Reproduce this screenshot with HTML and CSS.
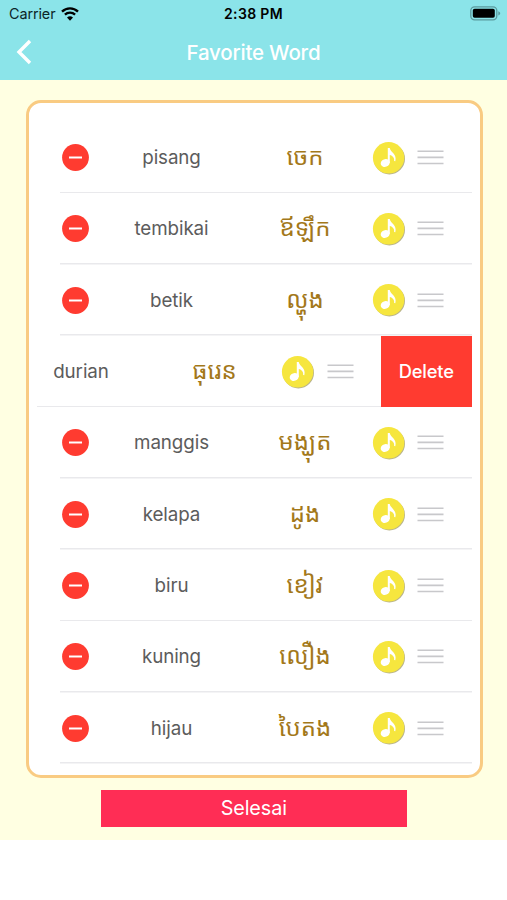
FILE: index.html
```html
<!DOCTYPE html>
<html lang="ms">
<head>
    <meta charset="UTF-8">
    <meta name="viewport" content="width=device-width, initial-scale=1.0">
    <title>Favorite Word</title>
    <link rel="stylesheet" href="styles.css">
</head>
<body>
    <header class="header">
        <div class="status-bar">
            <div class="carrier">
                <span>Carrier</span>
                <svg class="wifi" viewBox="0 0 18 14">
                    <path d="M1 4.6a11.6 11.6 0 0 1 16 0" fill="none" stroke="#000" stroke-width="2.4"/>
                    <path d="M3.9 7.7a7.4 7.4 0 0 1 10.2 0" fill="none" stroke="#000" stroke-width="2.3"/>
                    <path d="M9 13.7L6 10.6a4.3 4.3 0 0 1 6 0z"/>
                </svg>
            </div>
            <span class="time">2:38 PM</span>
            <svg class="battery" viewBox="0 0 31 15">
                <rect x="0.8" y="0.8" width="26" height="13" rx="3.8" fill="none" stroke="#5b9a9e" stroke-width="1.3"/>
                <rect x="2.8" y="2.8" width="22" height="9" rx="1.8"/>
                <path d="M28.3 5.2c2.5.8 2.5 3.4 0 4.2z" fill="#5b9a9e"/>
            </svg>
        </div>
        <div class="nav-bar">
            <svg class="back" viewBox="0 0 16 26">
                <path d="M14 2L3 13l11 11" fill="none" stroke="#fff" stroke-width="3.4"/>
            </svg>
            <h1>Favorite Word</h1>
        </div>
    </header>

    <main class="content">
        <div class="card">
            <ul class="word-list" id="wordList"></ul>
        </div>
        <button class="done">Selesai</button>
    </main>

    <script src="script.js"></script>
</body>
</html>
```
FILE: styles.css
```css
* {
    box-sizing: border-box;
}

body {
    font-family: Inter, Roboto, sans-serif;
    background-color: #fff;
    margin: 0;
}

svg {
    display: block;
}

.header {
    background: #8be4e9;
    height: 79.5px;
}

.status-bar {
    display: grid;
    grid-template-columns: 1fr auto 1fr;
    align-items: center;
    height: 27px;
    padding: 0 6px 0 9px;
    font-size: 14.4px;
    color: #0b2628;
}

.carrier {
    display: flex;
    align-items: center;
    gap: 6px;
    letter-spacing: -0.1px;
}

.wifi {
    width: 18px;
    height: 14px;
}

.time {
    margin-right: 3px;
    font-weight: 600;
    font-size: 14px;
    letter-spacing: 0.35px;
    color: #000;
}

.battery {
    width: 31px;
    height: 15px;
    justify-self: end;
}

.nav-bar {
    display: grid;
    grid-template-columns: 32px 1fr 32px;
    align-items: center;
    height: 50px;
    padding: 0 16px;
}

.back {
    width: 16px;
    height: 26px;
}

h1 {
    margin: 0;
    text-align: center;
    color: #fff;
    font-size: 20.5px;
    font-weight: 500;
    letter-spacing: -0.2px;
}

.content {
    height: 760px;
    padding: 20px 24.5px 0 25.5px;
    background: #ffffe2;
}

.card {
    height: 678px;
    padding: 19.5px 8px 0 8.5px;
    background: #fff;
    border: 3px solid #f9cb82;
    border-radius: 15px;
}

.word-list {
    margin: 0;
    padding: 0;
    list-style: none;
    overflow: hidden;
}

.row {
    display: flex;
    height: 71.33px;
}

.row.swiped {
    margin-left: -90.5px;
}

.cell {
    flex: 0 0 434.5px;
    display: grid;
    grid-template-columns: 27px 165px 102px 65px 27px;
    align-items: center;
    padding-left: 25px;
    background: linear-gradient(#e9e9ec, #e9e9ec) 23px 100% / 100% 1.5px no-repeat;
}

.minus {
    width: 27px;
    height: 27px;
}

.word {
    text-align: center;
    font-size: 18.8px;
    letter-spacing: -0.1px;
    color: #5c5c5c;
}

.khmer {
    padding-bottom: 3px;
    text-align: center;
    white-space: nowrap;
    font-family: "Noto Sans Khmer", "Khmer OS", "DejaVu Sans", sans-serif;
    font-size: 24px;
    line-height: 32px;
    color: #a3781a;
}

.note {
    width: 34px;
    height: 34px;
    justify-self: center;
}

.handle {
    width: 27px;
    height: 15px;
    margin-left: -4px;
}

.delete {
    flex: 0 0 90.5px;
    height: 71px;
    padding: 0;
    border: none;
    background: #ff3b30;
    color: #fff;
    font-family: inherit;
    font-size: 18.3px;
    font-weight: 500;
    letter-spacing: -0.2px;
}

.done {
    display: block;
    width: 305.5px;
    height: 36.5px;
    margin: 12.5px 0 0 75.5px;
    padding: 0;
    border: none;
    background: #ff2d55;
    color: #fff;
    font-family: inherit;
    font-size: 19.8px;
    letter-spacing: -0.1px;
}
```
FILE: script.js
```javascript
const words = [
    { ms: 'pisang', km: 'ចេក' },
    { ms: 'tembikai', km: 'ឪឡឹក' },
    { ms: 'betik', km: 'ល្ហុង' },
    { ms: 'durian', km: 'ធុរេន', swiped: true },
    { ms: 'manggis', km: 'មង្ឃុត' },
    { ms: 'kelapa', km: 'ដូង' },
    { ms: 'biru', km: 'ខៀវ' },
    { ms: 'kuning', km: 'លឿង' },
    { ms: 'hijau', km: 'បៃតង' }
];

const minusIcon = `<svg class="minus" viewBox="0 0 27 27">
    <circle cx="13.5" cy="13.5" r="13.4" fill="#ff3b30"/>
    <path d="M7 13.5h13" stroke="#fff" stroke-width="2"/>
</svg>`;

const noteIcon = `<svg class="note" viewBox="0 0 34 34">
    <circle cx="17.4" cy="17.8" r="15.6" fill="#b9b48c"/>
    <circle cx="16.6" cy="16.8" r="15.7" fill="#f6e63e"/>
    <ellipse cx="13.2" cy="22" rx="4.6" ry="3.8" transform="rotate(-20 13.2 22)" fill="#fff"/>
    <path d="M15.8 22V7h1.9c.8 4.4 7.6 6.2 5.6 13.2l-1.2-.2c.6-3-1.4-5.2-4.3-6V22z" fill="#fff"/>
</svg>`;

const handleIcon = `<svg class="handle" viewBox="0 0 27 15">
    <path d="M.5 1.3h26M.5 7.4h26M.5 13.5h26" stroke="#c8c8cb" stroke-width="1.6"/>
</svg>`;

document.getElementById('wordList').innerHTML = words.map(word => `
    <li class="row${word.swiped ? ' swiped' : ''}">
        <div class="cell">
            ${minusIcon}
            <span class="word">${word.ms}</span>
            <span class="khmer" lang="km">${word.km}</span>
            ${noteIcon}
            ${handleIcon}
        </div>
        ${word.swiped ? '<button class="delete">Delete</button>' : ''}
    </li>`).join('');
```
